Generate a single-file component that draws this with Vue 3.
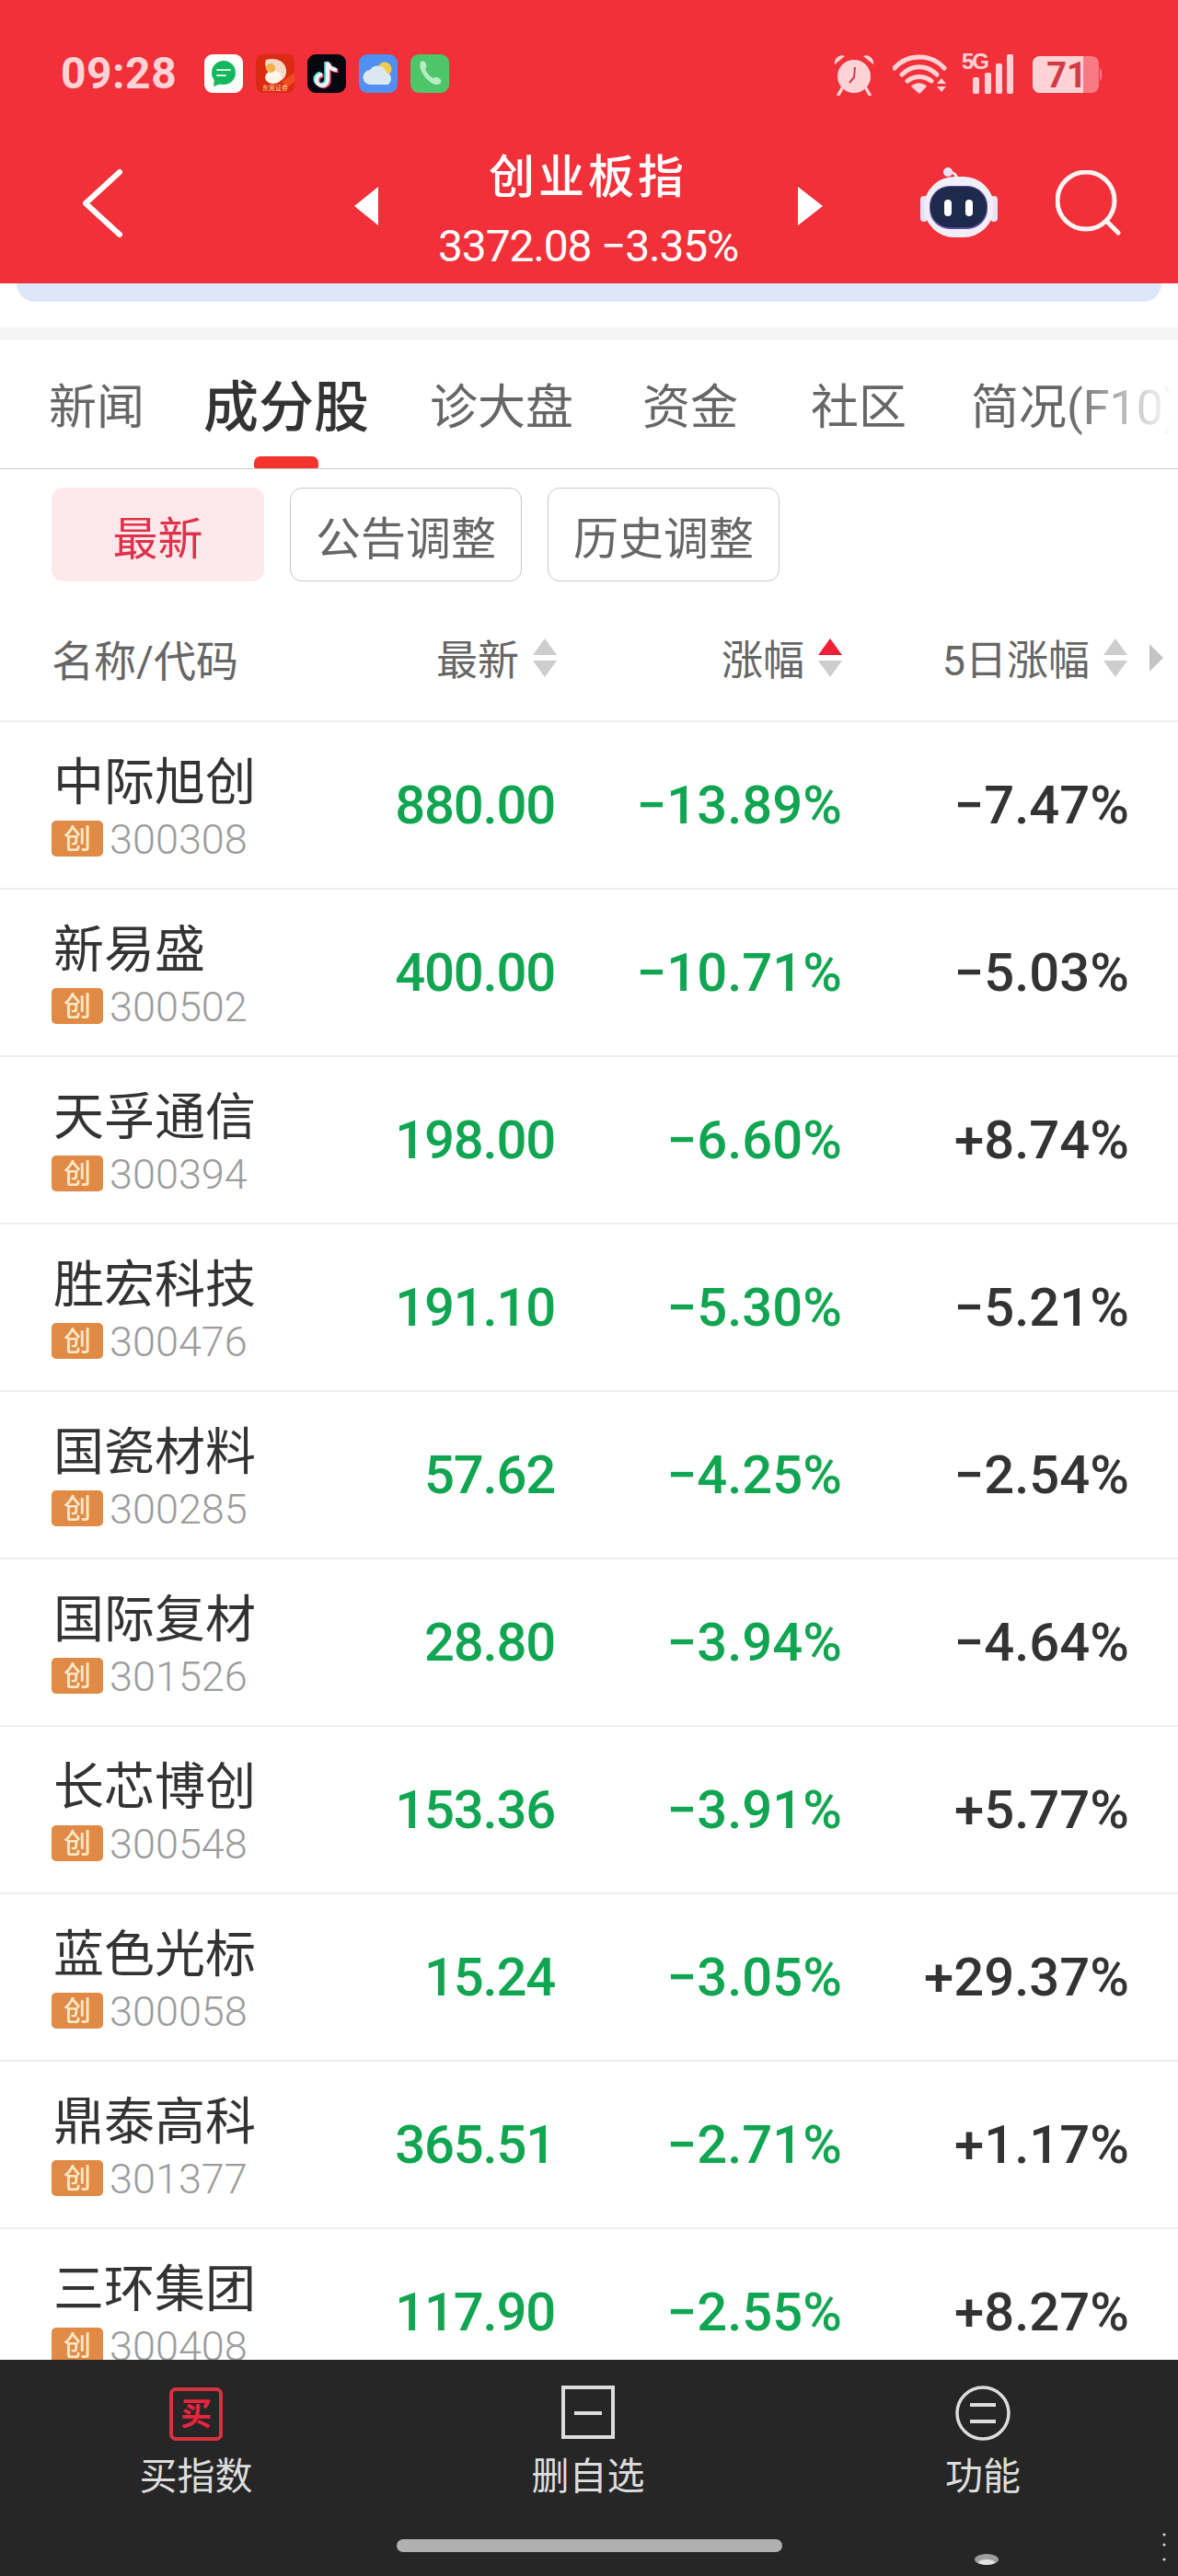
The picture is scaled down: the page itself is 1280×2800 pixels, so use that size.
<script setup>
const tabs = [
  { label: '新闻' },
  { label: '成分股', active: true },
  { label: '诊大盘' },
  { label: '资金' },
  { label: '社区' },
  { label: '简况(F10)' }
];

const rows = [
  { name: '中际旭创', code: '300308', price: '880.00', pct: '−13.89%', day5: '−7.47%' },
  { name: '新易盛', code: '300502', price: '400.00', pct: '−10.71%', day5: '−5.03%' },
  { name: '天孚通信', code: '300394', price: '198.00', pct: '−6.60%', day5: '+8.74%' },
  { name: '胜宏科技', code: '300476', price: '191.10', pct: '−5.30%', day5: '−5.21%' },
  { name: '国瓷材料', code: '300285', price: '57.62', pct: '−4.25%', day5: '−2.54%' },
  { name: '国际复材', code: '301526', price: '28.80', pct: '−3.94%', day5: '−4.64%' },
  { name: '长芯博创', code: '300548', price: '153.36', pct: '−3.91%', day5: '+5.77%' },
  { name: '蓝色光标', code: '300058', price: '15.24', pct: '−3.05%', day5: '+29.37%' },
  { name: '鼎泰高科', code: '301377', price: '365.51', pct: '−2.71%', day5: '+1.17%' },
  { name: '三环集团', code: '300408', price: '117.90', pct: '−2.55%', day5: '+8.27%' }
];
</script>

<template>
  <div class="page">
    <header class="top">
      <div class="status">
        <span class="time">09:28</span>
        <div class="apps">
          <svg class="app" viewBox="0 0 42 42">
            <rect width="42" height="42" rx="9" fill="#fbfffc" />
            <circle cx="21" cy="20" r="13" fill="#12b95c" />
            <path d="M11 27l-1 8 8-3z" fill="#12b95c" />
            <path d="M14 17h14M14 23h9" stroke="#dff5e6" stroke-width="2" stroke-linecap="round" />
          </svg>
          <svg class="app" viewBox="0 0 42 42">
            <rect width="42" height="42" rx="8" fill="#dc2a12" />
            <path d="M28 30L42 20v10L34 36z" fill="#f04a22" />
            <path d="M11 6c10-3 21 1 22 11 1 8-6 13-10 13 3-3 4-7 1-10-3-2-6-1-9 1-4-3-6-11-4-15z" fill="#f6d9c4" />
            <ellipse cx="19" cy="25" rx="9" ry="7" fill="#fff6ea" />
            <circle cx="16" cy="15" r="5" fill="#eeb04a" />
            <text x="21" y="39" class="app-text" text-anchor="middle">东莞证券</text>
          </svg>
          <svg class="app" viewBox="0 0 42 42">
            <rect width="42" height="42" rx="9" fill="#07070f" />
            <path d="M22 9v19a6 6 0 1 1-6-6M22 9c1 5 5 8 10 8" transform="translate(-1.5 -1)" fill="none" stroke="#47e3e0" stroke-width="4.5" />
            <path d="M22 9v19a6 6 0 1 1-6-6M22 9c1 5 5 8 10 8" transform="translate(1.5 1)" fill="none" stroke="#e8536e" stroke-width="4.5" />
            <path d="M22 9v19a6 6 0 1 1-6-6M22 9c1 5 5 8 10 8" fill="none" stroke="#f3f3f6" stroke-width="4" />
          </svg>
          <svg class="app" viewBox="0 0 42 42">
            <rect width="42" height="42" rx="9" fill="#5090f0" />
            <circle cx="28" cy="16" r="7.5" fill="#f4cb4e" />
            <path d="M13 33a8 8 0 0 1-1-16 10 10 0 0 1 18 3 7 7 0 0 1 1 13z" fill="#dce7f2" />
          </svg>
          <svg class="app" viewBox="0 0 42 42">
            <rect width="42" height="42" rx="9" fill="#4fc56a" />
            <path d="M11 8c3-2 5 0 6 3 1 2 0 4-1 5 2 5 5 8 9 10 2-1 4-2 6 0 3 2 3 4 1 6-3 2-8 1-13-4-7-6-10-15-8-20z" fill="#b9ebc4" />
          </svg>
        </div>
        <div class="sys">
          <svg class="alarm" viewBox="0 0 44 46">
            <path d="M9 38l-4 7M35 38l4 7" stroke="#ffd3d6" stroke-width="3.5" stroke-linecap="round" />
            <circle cx="22" cy="25" r="18" fill="#ffd3d6" />
            <path d="M1 12a8 8 0 0 1 11-9zM43 12a8 8 0 0 0-11-9z" fill="#ffd3d6" />
            <path d="M23 15l-1 11-5 6" fill="none" stroke="#d43a45" stroke-width="2" />
          </svg>
          <svg class="wifi" viewBox="0 0 60 44">
            <path d="M2 16C16 0 42 0 56 16M10 23c11-11 27-11 38 0M16 30c8-6 18-6 26 0" fill="none" stroke="#ffd3d6" stroke-width="5" stroke-linecap="round" />
            <path d="M20 36c5-5 12-5 17 0l-8 8z" fill="#ffd3d6" />
            <path d="M53 27l5 6H48zM53 42l5-6H48z" fill="#ffd3d6" />
          </svg>
          <svg class="signal" viewBox="0 0 56 44">
            <text x="0" y="17" class="fiveg">5G</text>
            <rect x="12" y="26" width="7" height="18" rx="2" fill="#ffd3d6" />
            <rect x="25" y="21" width="7" height="23" rx="2" fill="#ffd3d6" />
            <rect x="37" y="11" width="7" height="33" rx="2" fill="#ffd3d6" />
            <rect x="49" y="1" width="7" height="43" rx="2" fill="#ffd3d6" />
          </svg>
          <svg class="battery" viewBox="0 0 76 40">
            <rect width="72" height="40" rx="8" fill="#f97a82" />
            <path d="M8 0h47v40H8a8 8 0 0 1-8-8V8a8 8 0 0 1 8-8z" fill="#ffd3d6" />
            <path d="M73 13c3 1 3 13 0 14z" fill="#f97a82" />
            <text x="37" y="34" class="batt-num" text-anchor="middle">71</text>
          </svg>
        </div>
      </div>
      <div class="nav">
        <svg class="back" viewBox="0 0 46 76">
          <path d="M42 4L5 38l37 34" fill="none" stroke="#fff" stroke-width="6" stroke-linecap="round" stroke-linejoin="round" />
        </svg>
        <span class="tri tri-left"></span>
        <div class="title">
          <div class="title-name">创业板指</div>
          <div class="title-sub">3372.08 −3.35%</div>
        </div>
        <span class="tri tri-right"></span>
        <svg class="robot" viewBox="0 0 84 78">
          <path d="M30 7c6-2 10 2 11 10" fill="none" stroke="#f3e9f1" stroke-width="3" />
          <circle cx="30" cy="6" r="5" fill="#ece4f2" />
          <rect x="0" y="32" width="8" height="28" rx="4" fill="#e6e2f2" />
          <rect x="76" y="32" width="8" height="28" rx="4" fill="#e6e2f2" />
          <rect x="4" y="11" width="76" height="66" rx="33" fill="#f1eef8" />
          <rect x="10" y="21" width="63" height="47" rx="22" fill="#5a4a9a" />
          <rect x="11" y="22" width="61" height="44" rx="21" fill="#1e2a4c" />
          <rect x="26" y="36" width="8" height="18" rx="4" fill="#fff" />
          <rect x="49" y="36" width="8" height="18" rx="4" fill="#fff" />
        </svg>
        <svg class="search" viewBox="0 0 72 76">
          <circle cx="33" cy="33" r="31" fill="none" stroke="#fff4f4" stroke-width="5" />
          <path d="M57 57l11 11" stroke="#fff4f4" stroke-width="5" stroke-linecap="round" />
        </svg>
      </div>
    </header>

    <div class="band-wrap"><div class="band"></div></div>

    <nav class="tabs">
      <span v-for="t in tabs" :key="t.label" class="tab" :class="{ active: t.active }">{{ t.label }}</span>
      <div class="fade"></div>
    </nav>

    <div class="chips">
      <span class="chip chip-on">最新</span>
      <span class="chip">公告调整</span>
      <span class="chip">历史调整</span>
    </div>

    <div class="thead">
      <span class="th-name">名称/代码</span>
      <span class="th">最新
        <svg class="sort" viewBox="0 0 26 42"><path d="M13 0l13 18H0zM13 42l13-18H0z" fill="#cdcdcd" /></svg>
      </span>
      <span class="th">涨幅
        <svg class="sort" viewBox="0 0 26 42"><path d="M13 0l13 18H0z" fill="#f0203a" /><path d="M13 42l13-18H0z" fill="#cdcdcd" /></svg>
      </span>
      <span class="th">5日涨幅
        <svg class="sort" viewBox="0 0 26 42"><path d="M13 0l13 18H0zM13 42l13-18H0z" fill="#cdcdcd" /></svg>
      </span>
      <svg class="more" viewBox="0 0 15 30"><path d="M0 0l15 15L0 30z" fill="#c4c4c4" /></svg>
    </div>

    <div class="list">
      <div v-for="r in rows" :key="r.code" class="row">
        <div class="stock">
          <div class="stock-name">{{ r.name }}</div>
          <div class="stock-meta">
            <span class="badge">创</span>
            <span class="code">{{ r.code }}</span>
          </div>
        </div>
        <div class="num price green">{{ r.price }}</div>
        <div class="num green">{{ r.pct }}</div>
        <div class="num">{{ r.day5 }}</div>
      </div>
    </div>

    <footer class="bottom">
      <div class="actions">
        <div class="action">
          <div class="ic-buy"><span>买</span></div>
          <span class="action-label">买指数</span>
        </div>
        <div class="action">
          <svg class="ic" viewBox="0 0 60 60">
            <rect x="3" y="2" width="54" height="54" fill="none" stroke="#ddd" stroke-width="4" />
            <path d="M15 30h30" stroke="#ddd" stroke-width="4" />
          </svg>
          <span class="action-label">删自选</span>
        </div>
        <div class="action">
          <svg class="ic" viewBox="0 0 60 60">
            <circle cx="30" cy="30" r="28" fill="none" stroke="#ddd" stroke-width="3.5" />
            <path d="M16 21h28M16 39h28" stroke="#ddd" stroke-width="4" />
          </svg>
          <span class="action-label">功能</span>
        </div>
      </div>
      <div class="home-bar"></div>
      <!-- faint remains of the watermark in the corner -->
      <svg class="mark" viewBox="0 0 222 50">
        <ellipse cx="14" cy="36" rx="13" ry="6" fill="#fff" opacity="0.55" />
        <ellipse cx="14" cy="39" rx="9" ry="3" fill="#fff" opacity="0.7" />
        <circle cx="207" cy="9" r="1.6" fill="#fff" opacity="0.8" />
        <circle cx="207" cy="20" r="1.6" fill="#fff" opacity="0.8" />
        <circle cx="207" cy="36" r="1.6" fill="#fff" opacity="0.8" />
      </svg>
    </footer>
  </div>
</template>

<style>
body {
  background: #fff;
}
</style>

<style scoped>
.page {
  width: 1280px;
  height: 2800px;
  display: flex;
  flex-direction: column;
  overflow: hidden;
  background: #fff;
  font-family: Roboto, "Noto Sans CJK SC", sans-serif;
  color: #333;
}

.top {
  height: 308px;
  flex: none;
  background: #f1303a;
}

.status {
  height: 160px;
  padding: 58px 82px 0 66px;
  box-sizing: border-box;
  display: flex;
  align-items: flex-start;
}

.time {
  font-size: 48px;
  line-height: 44px;
  font-weight: 700;
  letter-spacing: 0.5px;
  color: #ffd3d6;
}

.apps {
  display: flex;
  gap: 14px;
  margin-left: 30px;
  margin-top: 1px;
}

.app {
  width: 42px;
  height: 42px;
  display: block;
}

.app-text {
  font-size: 7px;
  fill: #fbdc9a;
  font-family: "Noto Sans CJK SC", sans-serif;
}

.sys {
  margin-left: auto;
  display: flex;
  align-items: flex-start;
}

.alarm {
  width: 44px;
  height: 46px;
}

.wifi {
  width: 60px;
  height: 44px;
  margin-left: 20px;
}

.signal {
  width: 56px;
  height: 44px;
  margin-left: 15px;
  overflow: visible;
}

.fiveg {
  font-size: 24px;
  font-weight: 700;
  fill: #ffd3d6;
  font-family: "Liberation Sans", sans-serif;
  letter-spacing: -2px;
}

.battery {
  width: 76px;
  height: 40px;
  margin-left: 21px;
  margin-top: 3px;
  overflow: visible;
}

.batt-num {
  font-size: 38px;
  font-weight: 700;
  fill: #d23a44;
  font-family: Roboto, sans-serif;
}

.nav {
  height: 128px;
  display: flex;
  align-items: center;
}

.back {
  width: 46px;
  height: 76px;
  margin-left: 88px;
  margin-top: -6px;
}

.tri {
  width: 0;
  height: 0;
  border-top: 21px solid transparent;
  border-bottom: 21px solid transparent;
}

.tri-left {
  margin-left: 251px;
  border-right: 26px solid #fff;
}

.tri-right {
  border-left: 27px solid #fff;
}

.title {
  width: 456px;
  text-align: center;
  color: #fff;
}

.title-name {
  font-size: 50px;
  font-weight: 500;
  line-height: 60px;
  letter-spacing: 4px;
  margin-top: 6px;
}

.title-sub {
  font-size: 48px;
  line-height: 46px;
  letter-spacing: -1.2px;
  margin-top: 22px;
}

.robot {
  width: 84px;
  height: 78px;
  margin-left: 106px;
  margin-top: -8px;
}

.search {
  width: 72px;
  height: 76px;
  margin-left: 63px;
  margin-top: -2px;
}

.band-wrap {
  height: 28px;
  flex: none;
  padding: 0 18px;
}

.band {
  height: 20px;
  background: #dce8fa;
  border-radius: 0 0 20px 20px;
}

.tabs {
  position: relative;
  height: 154px;
  flex: none;
  margin-top: 20px;
  border-top: 14px solid #f5f5f5;
  border-bottom: 1px solid #ccc;
  box-sizing: border-box;
  display: flex;
  align-items: flex-start;
  padding-top: 38px;
  padding-left: 53px;
  overflow: hidden;
  white-space: nowrap;
  font-size: 52px;
  line-height: 72px;
  color: #666;
}

.tab {
  margin-right: 66px;
  position: relative;
  flex: none;
}

.tab:nth-child(1) {
  margin-right: 64px;
}

.tab:nth-child(3) {
  margin-right: 75px;
}

.tab:nth-child(4) {
  margin-right: 79px;
}

.tab:nth-child(5) {
  margin-right: 70px;
}

.tab.active {
  font-size: 60px;
  font-weight: 500;
  color: #333;
}

.tab.active::after {
  content: "";
  position: absolute;
  left: calc(50% - 35px);
  top: 88px;
  width: 70px;
  height: 14px;
  border-radius: 7px 7px 4px 4px;
  background: #f5352d;
}

.fade {
  position: absolute;
  right: 0;
  top: 0;
  bottom: 0;
  width: 120px;
  background: linear-gradient(to right, rgba(255, 255, 255, 0), #fff 95%);
}

.chips {
  height: 102px;
  flex: none;
  margin-top: 20px;
  padding-left: 56px;
  display: flex;
  gap: 28px;
}

.chip {
  width: 252px;
  box-sizing: border-box;
  border: 1.5px solid #c8c8c8;
  border-radius: 13px;
  display: flex;
  align-items: center;
  justify-content: center;
  font-size: 49px;
  color: #666;
}

.chip-on {
  width: 231px;
  border: none;
  background: #fde9eb;
  color: #e0314a;
}

.thead {
  height: 151px;
  flex: none;
  box-sizing: border-box;
  padding: 14px 0 0 56px;
  display: grid;
  grid-template-columns: 300px 249px 310px 310px 1fr;
  align-items: center;
  font-size: 45px;
  color: #666;
}

.th-name {
  font-size: 46px;
}

.th {
  display: flex;
  justify-content: flex-end;
  align-items: center;
  gap: 15px;
}

.sort {
  width: 26px;
  height: 42px;
}

.more {
  width: 15px;
  height: 30px;
  margin-left: 24px;
}

.list {
  flex: 1;
  min-height: 0;
  overflow: hidden;
}

.row {
  height: 182px;
  box-sizing: border-box;
  border-top: 2px solid #eee;
  display: grid;
  grid-template-columns: 300px 247px 312px 312px;
  padding-left: 56px;
  align-items: center;
}

.stock {
  padding-top: 4px;
}

.stock-name {
  font-size: 55px;
  line-height: 60px;
  padding-left: 2px;
  color: #333;
}

.stock-meta {
  display: flex;
  align-items: center;
  margin-top: 8px;
}

.badge {
  width: 56px;
  height: 39px;
  border-radius: 5px;
  background: #e08a45;
  color: #fbe8c8;
  font-size: 30px;
  font-weight: 500;
  line-height: 39px;
  text-align: center;
}

.code {
  margin-left: 7px;
  margin-top: 3px;
  font-size: 45px;
  font-weight: 300;
  line-height: 44px;
  color: #9c9c9c;
}

.num {
  text-align: right;
  font-size: 58px;
  font-weight: 500;
  color: #333;
}

.price {
  letter-spacing: -1.2px;
}

.green {
  color: #10a550;
}

.bottom {
  position: relative;
  height: 235px;
  flex: none;
  background: #262626;
}

.actions {
  display: grid;
  grid-template-columns: 426px 426px 432px;
  padding-top: 28px;
}

.action {
  display: flex;
  flex-direction: column;
  align-items: center;
}

.ic {
  width: 60px;
  height: 60px;
}

.ic-buy {
  width: 58px;
  height: 58px;
  box-sizing: border-box;
  border: 4px solid #d8323f;
  border-radius: 7px;
  color: #e8243f;
  font-size: 34px;
  font-weight: 700;
  line-height: 50px;
  text-align: center;
  margin-top: 2px;
}

.action-label {
  margin-top: 14px;
  font-size: 41px;
  line-height: 50px;
  color: #ddd;
}

.home-bar {
  width: 419px;
  height: 14px;
  margin: 43px auto 0;
  border-radius: 7px;
  background: #b0b0b0;
}

.mark {
  position: absolute;
  left: 1058px;
  top: 181px;
  width: 222px;
  height: 50px;
}
</style>
